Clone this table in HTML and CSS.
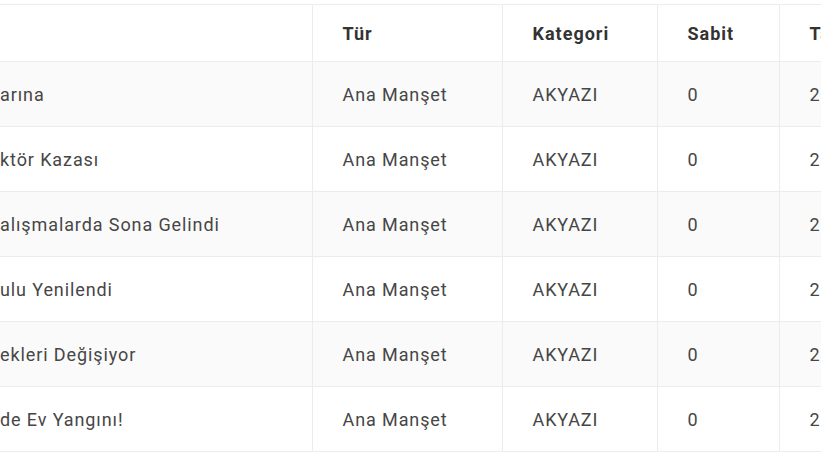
FILE: index.html
```html
<!DOCTYPE html>
<html lang="tr">
<head>
<meta charset="utf-8">
<title>Manşetler</title>
<link rel="stylesheet" href="styles.css">
</head>
<body>
<div class="wrap">
<table class="news">
<colgroup>
<col class="c-title"><col class="c-type"><col class="c-cat"><col class="c-fix"><col class="c-date">
</colgroup>
<thead>
<tr><th class="first"></th><th>Tür</th><th>Kategori</th><th>Sabit</th><th>Tarih</th></tr>
</thead>
<tbody>
<tr><td class="first">arına</td><td>Ana Manşet</td><td>AKYAZI</td><td>0</td><td>2024</td></tr>
<tr><td class="first">ktör Kazası</td><td>Ana Manşet</td><td>AKYAZI</td><td>0</td><td>2024</td></tr>
<tr><td class="first">alışmalarda Sona Gelindi</td><td>Ana Manşet</td><td>AKYAZI</td><td>0</td><td>2024</td></tr>
<tr><td class="first">ulu Yenilendi</td><td>Ana Manşet</td><td>AKYAZI</td><td>0</td><td>2024</td></tr>
<tr><td class="first">ekleri Değişiyor</td><td>Ana Manşet</td><td>AKYAZI</td><td>0</td><td>2024</td></tr>
<tr><td class="first">de Ev Yangını!</td><td>Ana Manşet</td><td>AKYAZI</td><td>0</td><td>2024</td></tr>
</tbody>
</table>
</div>
</body>
</html>
```
FILE: styles.css
```css
html, body {
  margin: 0;
  padding: 0;
  background: #fff;
  overflow: hidden;
}
.wrap {
  padding-top: 4px;
  width: 821px;
  overflow: hidden;
}
.news {
  table-layout: fixed;
  border-collapse: collapse;
  width: 1000px;
  font-family: Roboto, "Noto Sans", sans-serif;
  font-size: 18px;
  letter-spacing: 0.9px;
  color: #464646;
}
.c-title { width: 312px; }
.c-type { width: 190px; }
.c-cat { width: 155px; }
.c-fix { width: 122px; }
.c-date { width: 221px; }
.news th, .news td {
  border: 1px solid #ececec;
  text-align: left;
  padding: 0 0 0 30px;
  white-space: nowrap;
  overflow: hidden;
}
.news th {
  height: 56px;
  font-weight: 700;
  color: #333;
  letter-spacing: 1px;
}
.news td {
  height: 64px;
}
.news th.first, .news td.first {
  padding-left: 0;
  border-left: none;
}
.news tbody tr:nth-child(odd) td {
  background: #fafafa;
}
```
